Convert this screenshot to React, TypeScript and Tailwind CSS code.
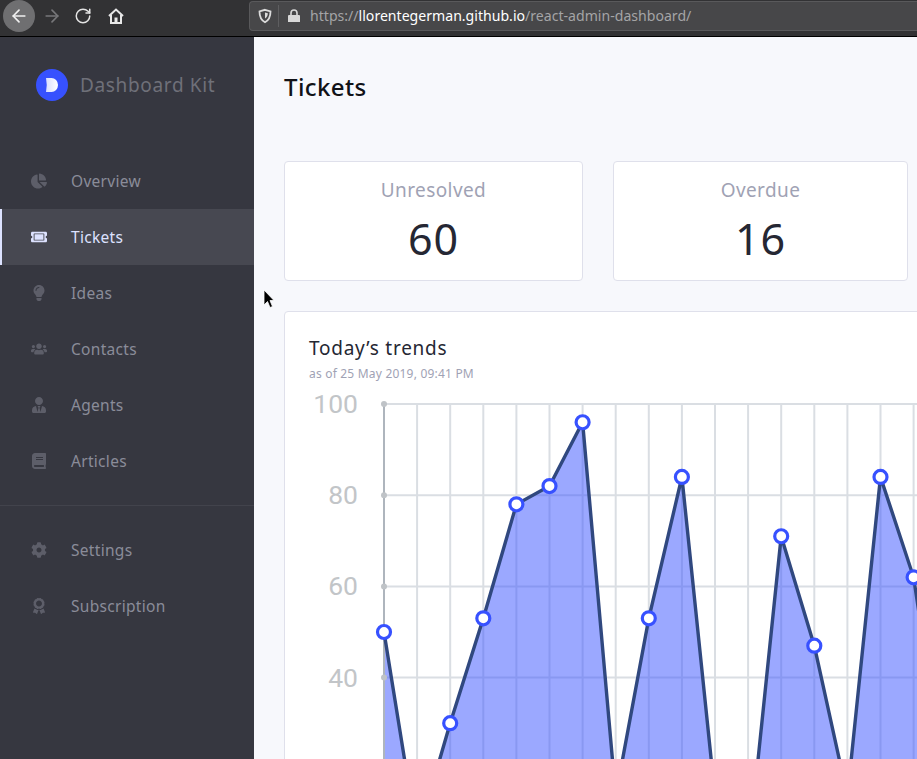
import React from 'react';
import { ArrowLeft, ArrowRight, RotateCw } from 'lucide-react';
import { FaAward, FaBook, FaChartPie, FaCog, FaLightbulb, FaTicketAlt, FaUsers, FaUserTie } from 'react-icons/fa';

const values = [50, 5, 30, 53, 78, 82, 96, 14, 53, 84, 14, 1, 71, 47, 14, 84, 62, 14];
const xOf = (i: number) => 384 + i * 33.1;
const yOf = (v: number) => 860 - v * 4.56;

const mainItems = [
  { label: 'Overview', icon: FaChartPie },
  { label: 'Tickets', icon: FaTicketAlt, active: true },
  { label: 'Ideas', icon: FaLightbulb },
  { label: 'Contacts', icon: FaUsers },
  { label: 'Agents', icon: FaUserTie },
  { label: 'Articles', icon: FaBook },
];

const otherItems = [
  { label: 'Settings', icon: FaCog },
  { label: 'Subscription', icon: FaAward },
];

type Item = { label: string; icon: React.ComponentType<{ className?: string }>; active?: boolean };

const NavItem: React.FC<{ item: Item }> = ({ item }) => {
  const Icon = item.icon;
  return (
    <div
      className={
        item.active
          ? 'flex h-14 items-center border-l-2 border-[#dde2ff] bg-[#474851] pl-[29px] text-[#dde2ff]'
          : 'flex h-14 items-center pl-[31px] text-[#8a8c99]'
      }
    >
      <Icon className={item.active ? 'h-4 w-4 text-[#dde2ff]' : 'h-4 w-4 text-[#5d5e69]'} />
      <span className="ml-6 text-[15.5px] leading-6 tracking-[0.3px]">{item.label}</span>
    </div>
  );
};

const StatCard: React.FC<{ title: string; value: number; width: string }> = ({ title, value, width }) => (
  <div className={`${width} flex h-[120px] flex-col items-center rounded-[4px] border border-[#dfe0eb] bg-white pt-[15px]`}>
    <div className="text-[19px] leading-[26px] tracking-[0.4px] text-[#9fa2b4]">{title}</div>
    <div className="mt-[7px] text-[43px] leading-[58px] tracking-[1px] text-[#252733]">{value}</div>
  </div>
);

const Trends: React.FC = () => {
  const line = values.map((v, i) => `${xOf(i)},${yOf(v)}`).join(' ');
  const area = `384,860 ${line} ${xOf(values.length - 1)},860`;
  return (
    <svg className="mt-[3px] block h-[400px] w-[680px]" viewBox="285 385 680 400">
      {values.map((_, i) => (
        <line key={i} x1={xOf(i)} x2={xOf(i)} y1="404" y2="860" stroke="#dadee3" strokeWidth="2" />
      ))}
      {[100, 80, 60, 40, 20].map((v) => (
        <line key={v} x1="384" x2="965" y1={yOf(v)} y2={yOf(v)} stroke="#dadee3" strokeWidth="2" />
      ))}
      {[100, 80, 60, 40].map((v) => (
        <text key={v} x="358" y={yOf(v) + 9} textAnchor="end" fontFamily="Roboto, sans-serif" fontSize="26.5" fill="#c2c5c8">
          {v}
        </text>
      ))}
      <polygon points={area} fill="#3751ff" fillOpacity="0.5" />
      <line x1="384" x2="384" y1="404" y2="860" stroke="#aeb5bd" strokeWidth="2" />
      {[100, 80, 60, 40, 20].map((v) => (
        <circle key={v} cx="384" cy={yOf(v)} r="3" fill="#bfc3c7" />
      ))}
      <polyline points={line} fill="none" stroke="#30487f" strokeWidth="3.4" />
      {values.map((v, i) => (
        <circle key={i} cx={xOf(i)} cy={yOf(v)} r="6.5" fill="#fff" stroke="#3751ff" strokeWidth="3.2" />
      ))}
    </svg>
  );
};

const BrowserBar: React.FC = () => (
  <div className="flex h-[37px] shrink-0 items-start border-b border-black bg-[#323234] font-['Noto_Sans',sans-serif]">
    <div className="ml-[3px] flex h-8 w-8 items-center justify-center rounded-full bg-[#6f6f71]">
      <ArrowLeft className="h-5 w-5 text-[#f0f0f0]" />
    </div>
    <ArrowRight className="ml-[7px] mt-[6px] h-5 w-5 text-[#77777a]" />
    <RotateCw className="ml-3 mt-[7px] h-[18px] w-[18px] text-[#e4e4e4]" />
    <svg className="ml-[15px] mt-[7px] h-[18px] w-[18px]" viewBox="0 0 18 18" fill="none" stroke="#e8e8e8" strokeWidth="2">
      <path d="M2 9l7-6.5L16 9M4 8v8h10V8" />
      <rect x="7.5" y="10.5" width="3" height="5" fill="#e8e8e8" stroke="none" />
    </svg>
    <div className="ml-[124px] mt-[1px] flex h-[30px] flex-1 items-center rounded-l-[4px] border border-r-0 border-[#59595b] bg-[#474749] pl-[7px]">
      <svg className="h-4 w-4" viewBox="0 0 16 16" fill="none" stroke="#dcdcdc" strokeWidth="1.8">
        <path d="M8 1.8l5.5 1.6c0 5-1.5 8.6-5.5 10.8C4 12 2.500 8.400 2.500 3.400z" />
        <path d="M8 4.500l2.800.8c0 2.300-.8 4-2.800 5.200z" fill="#dcdcdc" stroke="none" />
      </svg>
      <div className="ml-[5px] h-[22px] w-px bg-[#5e5e60]" />
      <svg className="ml-[8px] h-[14px] w-[14px]" viewBox="0 0 14 14">
        <path d="M2 6h10a1 1 0 0 1 1 1v6H1V7a1 1 0 0 1 1-1z" fill="#d8d8d8" />
        <path d="M4 6.500V4a3 3 0 0 1 6 0v2.500" fill="none" stroke="#d8d8d8" strokeWidth="1.600" />
      </svg>
      <div className="ml-[9px] whitespace-nowrap text-[14.1px] text-[#a4a4a6]">
        https://<span className="text-white">llorentegerman.github.io</span>/react-admin-dashboard/
      </div>
    </div>
  </div>
);

export default function App() {
  return (
    <div className="relative flex h-[759px] w-[917px] flex-col overflow-hidden font-['Noto_Sans',sans-serif]">
      <BrowserBar />
      <div className="flex min-h-0 flex-1">
        <aside className="w-[254px] shrink-0 bg-[#363740]">
          <div className="flex h-[96px] items-center pl-9">
            <div className="flex h-8 w-8 items-center justify-center rounded-full bg-[#3751fe]">
              <svg className="h-[14px] w-3" viewBox="0 0 12 14">
                <defs>
                  <linearGradient id="logoFill" x1="0" x2="1" y1="0" y2="0">
                    <stop offset="0" stopColor="#d9deff" />
                    <stop offset="1" stopColor="#ffffff" />
                  </linearGradient>
                </defs>
                <path d="M0 0h5.500a6.500 7 0 0 1 0 14H0q1.500-7 0-14z" fill="url(#logoFill)" />
              </svg>
            </div>
            <span className="ml-3 text-[19px] tracking-[0.65px] text-[#6f7079]">Dashboard Kit</span>
          </div>
          <nav className="mt-5">
            {mainItems.map((item) => (
              <NavItem key={item.label} item={item} />
            ))}
          </nav>
          <div className="mb-4 mt-4 border-t border-[#42434c]" />
          <nav>
            {otherItems.map((item) => (
              <NavItem key={item.label} item={item} />
            ))}
          </nav>
        </aside>
        <main className="min-w-0 flex-1 overflow-hidden bg-[#f7f8fc] pl-[30px]">
          <h1 className="mt-[34px] text-[24px] font-medium leading-[32px] tracking-[0.4px] text-[#111217]">Tickets</h1>
          <div className="mt-[58px] flex gap-[30px]">
            <StatCard title="Unresolved" value={60} width="w-[299px]" />
            <StatCard title="Overdue" value={16} width="w-[295px]" />
          </div>
          <section className="mt-[30px] h-[600px] w-[720px] rounded-[4px] border border-[#dfe0eb] bg-white">
            <div className="pl-6 pt-[23px]">
              <div className="text-[19px] leading-[26px] tracking-[0.75px] text-[#252733]">Today’s trends</div>
              <div className="mt-[5px] text-[12px] leading-4 tracking-[0.2px] text-[#9fa2b4]">as of 25 May 2019, 09:41 PM</div>
            </div>
            <Trends />
          </section>
        </main>
      </div>
      {/* mouse pointer from the capture */}
      <svg className="absolute left-[263px] top-[289px] h-[20px] w-[13px]" viewBox="0 0 13 20">
        <path d="M1 1v15l3.500-3.500 2.500 6 2.500-1-2.500-6H11z" fill="#000" stroke="#fff" strokeWidth="0.8" />
      </svg>
    </div>
  );
}
